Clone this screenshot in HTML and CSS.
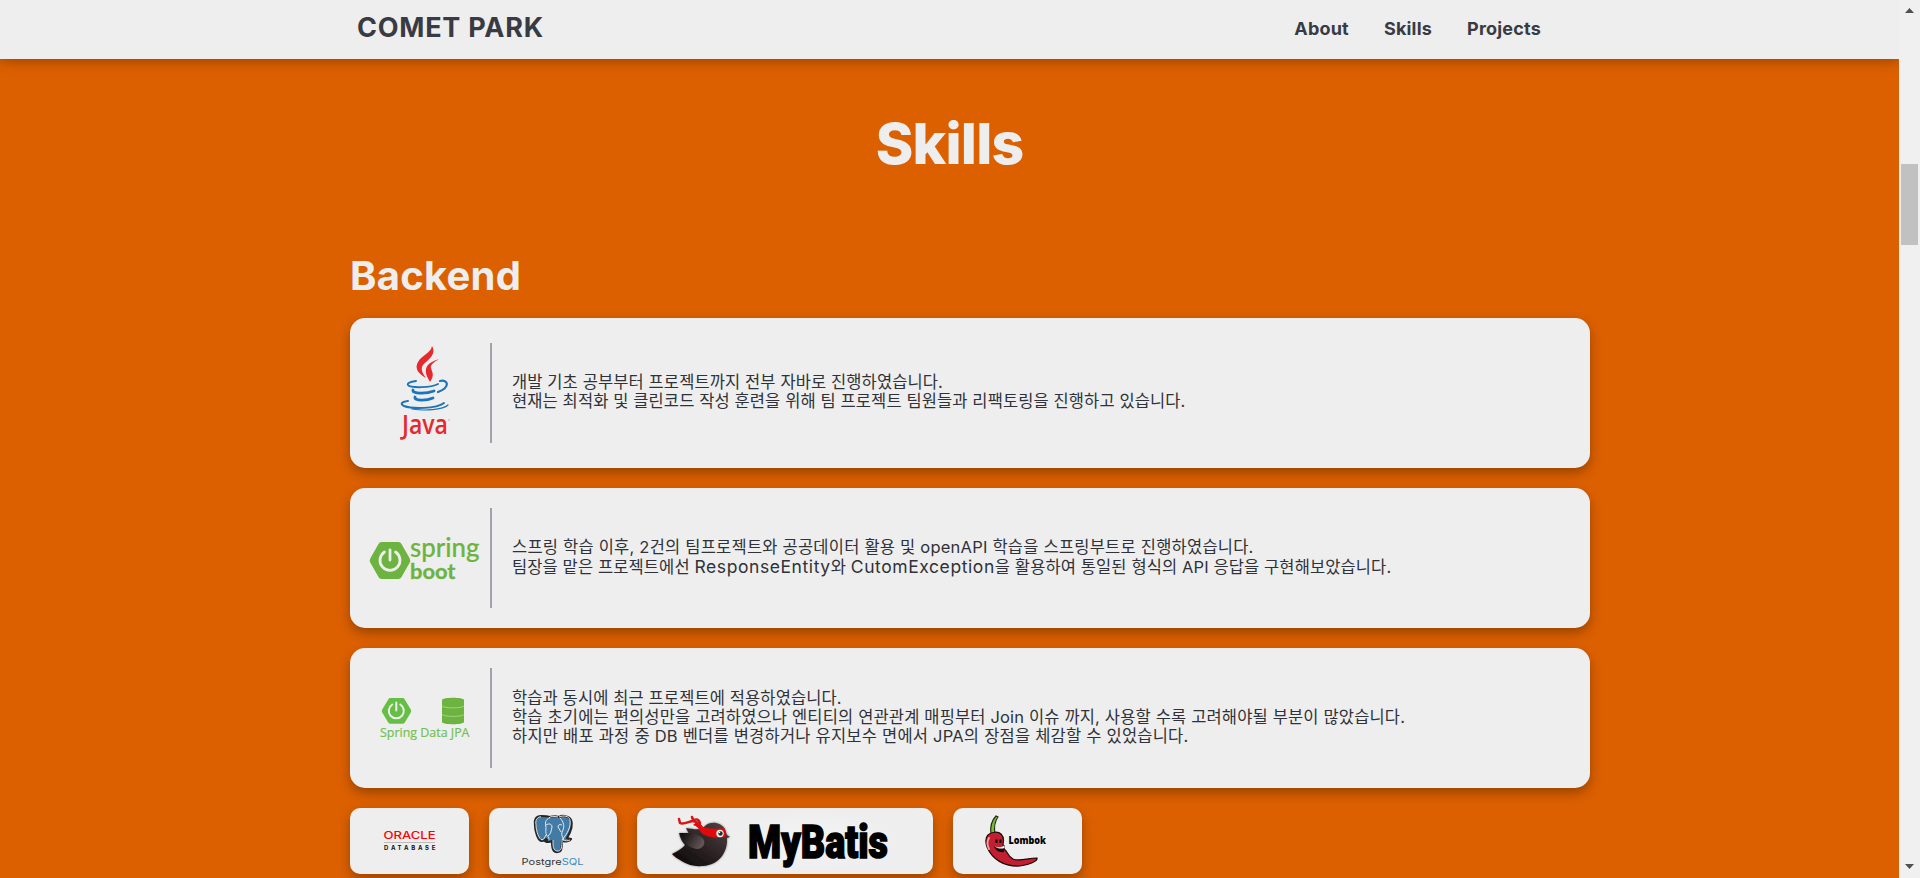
FILE: index.html
```html
<!DOCTYPE html>
<html lang="ko">
<head>
<meta charset="utf-8">
<title>COMET PARK</title>
<link rel="stylesheet" href="styles.css">
</head>
<body>
<div class="page">
  <div class="view">
    <header class="header">
      <div class="brand">COMET PARK</div>
      <nav class="nav"><span>About</span><span>Skills</span><span>Projects</span></nav>
    </header>
    <main class="main">
      <h1 class="title">Skills</h1>
      <section class="section">
        <h2 class="subtitle">Backend</h2>
        <article class="card card-tall">
          <svg class="logo" viewBox="370 343 110 100">
            <g fill="#e52a2e">
              <path d="M432 346c5 8-4 14-9 19-3 4 0 9 3 13-7-4-12-9-8-16 4-7 13-9 14-16z"/>
              <path d="M439 359c-5 3-9 6-8 9 1 4 4 7-1 14-2-4-5-8-4-13 1-6 8-8 13-10z"/>
            </g>
            <g fill="none" stroke="#1b75bb" stroke-linecap="round">
              <path d="M416 381c-6 1-9 2-8 4 2 3 23 3 30-1" stroke-width="2"/>
              <path d="M440 381c8-2 11 6-2 11" stroke-width="2.2"/>
              <path d="M413 390c-1 4 13 4 21 1M415 397c-1 4 11 4 18 1" stroke-width="2.8"/>
              <path d="M408 401c-7 1-8 3-4 5 8 3 32 3 40-3" stroke-width="2"/>
              <path d="M412 409c12 2 31 1 36-4" stroke-width="1.2"/>
            </g>
            <text x="402" y="434" class="java" textLength="46" lengthAdjust="spacingAndGlyphs">Java</text>
            <circle cx="449" cy="420" r=".5" fill="#e52a2e"/>
          </svg>
          <div class="desc">
            <p class="s1">개발 기초 공부부터 프로젝트까지 전부 자바로 진행하였습니다.</p>
            <p class="s1">현재는 최적화 및 클린코드 작성 훈련을 위해 팀 프로젝트 팀원들과 리팩토링을 진행하고 있습니다.</p>
          </div>
        </article>
        <article class="card">
          <svg class="logo" viewBox="370 508 110 100">
            <path d="M381.500 542h17q2 0 3 2l8 14q1.500 2.500 0 5l-8 14q-1 2-3 2h-17q-2 0-3-2l-8-14q-1.500-2.500 0-5l8-14q1-2 3-2z" fill="#6db33f"/>
            <path d="M384.500 552a10 10 0 1 0 11 0M390 550v10" fill="none" stroke="#eee" stroke-width="2.800" stroke-linecap="round"/>
            <text x="410" y="556.500" class="spring" textLength="69.500" lengthAdjust="spacingAndGlyphs">spring</text>
            <text x="410" y="578.500" class="boot" textLength="45.500" lengthAdjust="spacingAndGlyphs">boot</text>
          </svg>
          <div class="desc">
            <p class="s2">스프링 학습 이후, 2건의 팀프로젝트와 공공데이터 활용 및 openAPI 학습을 스프링부트로 진행하였습니다.</p>
            <p class="s1">팀장을 맡은 프로젝트에선 <span class="latin">ResponseEntity</span>와 <span class="latin">CutomException</span>을 활용하여 통일된 형식의 API 응답을 구현해보았습니다.</p>
          </div>
        </article>
        <article class="card">
          <svg class="logo" viewBox="370 668 110 100">
            <path d="M390.500 698h12q1.500 0 2.300 1.400l6 10q.9 1.500 0 3l-6 10q-.8 1.400-2.300 1.400h-12q-1.500 0-2.300-1.400l-6-10q-.9-1.500 0-3l6-10q.8-1.400 2.300-1.400z" fill="#66bf45"/>
            <path d="M392.300 704.500a7.500 7.500 0 1 0 8 0M396.300 702.500v8" fill="none" stroke="#eee" stroke-width="2" stroke-linecap="round"/>
            <path d="M442 700c0-3 22-3 22 0v22c0 3-22 3-22 0z" fill="#6db33f"/>
            <path d="M442 706c2 2.500 20 2.500 22 0M442 714.500c2 2.500 20 2.500 22 0" fill="none" stroke="#a5d08a" stroke-width="1"/>
            <text x="380" y="736.500" class="jpa" textLength="89.500" lengthAdjust="spacingAndGlyphs">Spring Data JPA</text>
          </svg>
          <div class="desc">
            <p class="s1">학습과 동시에 최근 프로젝트에 적용하였습니다.</p>
            <p class="s3">학습 초기에는 편의성만을 고려하였으나 엔티티의 연관관계 매핑부터 Join 이슈 까지, 사용할 수록 고려해야될 부분이 많았습니다.</p>
            <p class="s2">하지만 배포 과정 중 DB 벤더를 변경하거나 유지보수 면에서 JPA의 장점을 체감할 수 있었습니다.</p>
          </div>
        </article>
        <div class="chips">
          <div class="chip">
            <svg width="119" height="66" viewBox="350 808 119 66">
              <text x="383.500" y="838.700" class="oracle" textLength="52" lengthAdjust="spacingAndGlyphs">ORACLE</text>
              <path d="M384 842.500h51" stroke="#bbb"/>
              <text x="384" y="850.200" class="database" textLength="51.500">DATABASE</text>
            </svg>
          </div>
          <div class="chip">
            <svg width="128" height="66" viewBox="489 808 128 66">
              <path d="M541 816c-5 0-7 4-6 9 0 6 3 16 7 16 2 0 3-1 4-2l1 1-2 1c3 2 5 1 7 0 0 4 0 8 2 10 2 2 6 1 7-1 1-3 1-6 1-9 3 1 8 0 9-2l-4-1c3-5 6-13 4-18-2-4-8-5-12-3-3-1-6-1-9 0-3-1-6-1-9-1z" fill="#427ca6" stroke="#262626" stroke-width="2.200" stroke-linejoin="round"/>
              <path d="M541 816.800c-4 0-6 4-5 8 0 6 3 15 6 15 2 0 3-3 4-5M550 817.500c-5 2-5 6-4 10 0 3-1 5 1 8 1 1 2 2 2 4M558 817c-4-1-7-1-9 1M559 817c5-2 10-1 11 3 1 6-2 12-5 16l-3 4M560 818c4 4 5 9 2 14-1 3 1 6 2 8M546 825c3-2 6-1 6 2-1 4-1 7-4 9M562 825c-3-1-4 0-4 2l3 5M553 840c0 5 0 9 2 10 2 2 5 1 6-1 1-3 1-6 1-9M563 840c2 1 5 1 7 0" fill="none" stroke="#f4f4f4" stroke-width=".9"/>
              <text x="521.500" y="864.500" class="pg" textLength="62" lengthAdjust="spacingAndGlyphs">Postgre<tspan fill="#3d8bbd">SQL</tspan></text>
            </svg>
          </div>
          <div class="chip">
            <svg width="296" height="66" viewBox="637 808 296 66">
              <defs>
                <radialGradient id="glow"><stop offset="0" stop-color="#f4f4f4"/><stop offset="1" stop-color="#eee"/></radialGradient>
                <linearGradient id="bird" x1="0" y1="1" x2=".9" y2="0"><stop offset="0" stop-color="#060404"/><stop offset=".5" stop-color="#2b2223"/><stop offset="1" stop-color="#4d4142"/></linearGradient>
                <linearGradient id="wing" x1="0" y1="0" x2="1" y2=".4"><stop offset="0" stop-color="#080606"/><stop offset="1" stop-color="#615253"/></linearGradient>
                <filter id="soft" x="-20%" y="-20%" width="140%" height="140%"><feDropShadow dx="0" dy="0" stdDeviation="1.300" flood-opacity=".45"/></filter>
              </defs>
              <rect x="725" y="811" width="180" height="60" fill="url(#glow)"/>
              <g filter="url(#soft)">
                <path d="M672 854c6-3 11-6 13-9-3-3-5-7-6-12l10 1-3-6c8 1 15 3 19-2 6-6 17-3 20 3l2 6 3 2-3 1c1 14-8 27-24 28-11 1-19-3-23-6-4-2-6-4-8-6z" fill="url(#bird)"/>
                <path d="M680 833c10 0 20 0 24 7 2 7-5 11-11 8-7-2-11-9-13-15z" fill="url(#wing)"/>
              </g>
              <path d="M698 821l5 6c6 2 15 2 21 1q3 5 1 9c-8 2-22 0-25-6-2-4-4-5-7-6z" fill="#df0a0a"/>
              <path d="M702 828c-3-5-6-7-10-7-4 1-9 4-12 2l-1-4M700 823c-1-4-3-4-7-3l-1-3" fill="none" stroke="#d91515" stroke-width="2.500" stroke-linecap="round"/>
              <circle cx="720" cy="833.500" r="3.700" fill="#f5f5f5"/><circle cx="720.500" cy="833.500" r="2.200" fill="#17313a"/><circle cx="719.500" cy="832.500" r=".7" fill="#fff"/>
              <text x="748" y="857.500" class="mybatis" textLength="140" lengthAdjust="spacingAndGlyphs">MyBatis</text>
            </svg>
          </div>
          <div class="chip">
            <svg width="129" height="66" viewBox="953 808 129 66">
              <path d="M991 835c-1-7 0-14 5-19l2 1c-4 5-4 11-3 18z" fill="#7cb83a" stroke="#1b2a10" stroke-width="1.100"/>
              <path d="M988 835c3-3 10-4 13-1s3 6 2 10l1 5c4 2 2 6 9 10 7 3 14-1 24-1 1 3-8 7-17 8-16 1-28-7-33-19-2-6-1-10 1-12z" fill="#c41f30" stroke="#1a0608" stroke-width="1.200"/>
              <path d="M989 838c-2 3-2 7 0 11" stroke="#ee9ba2" stroke-width="2" fill="none" stroke-linecap="round"/>
              <path d="M996.500 839.500v3.500M1000.500 839.500v3.500" stroke="#140406" stroke-width="2"/>
              <path d="M994 846c3 2 8 2 11-1 0 3-1 5-1 7-5 1-9-2-10-6z" fill="#111"/><path d="M994.500 846c3 2 7 1.500 10-.5v2.500c-3 1-7 1-10-2z" fill="#fff"/>
              <text x="1008.500" y="844.200" class="lombok" textLength="37.500" lengthAdjust="spacingAndGlyphs">Lombok</text>
            </svg>
          </div>
        </div>
      </section>
    </main>
  </div>
  <div class="scrollbar">
    <svg width="9" height="5" viewBox="0 0 9 5"><path d="M0 5L4.500 0L9 5z" fill="#505050"/></svg>
    <div class="thumb"></div>
    <svg width="9" height="5" viewBox="0 0 9 5"><path d="M0 0L4.500 5L9 0z" fill="#505050"/></svg>
  </div>
</div>
</body>
</html>
```
FILE: styles.css
```css
* { box-sizing: border-box; margin: 0; padding: 0; }
body { width: 1920px; height: 878px; overflow: hidden; background: #dc6000; font-family: Inter, "Noto Sans CJK KR", sans-serif; color: #383b43; }
.page { display: flex; height: 878px; overflow: hidden; }
.view { width: 1899px; height: 878px; overflow: hidden; background: #dc6000; }
.header { height: 59px; padding: 0 358px 0 357px; display: flex; justify-content: space-between; align-items: center; background: #eee; box-shadow: 0 2px 12px rgba(0,0,0,.3); }
.brand { font-size: 27px; font-weight: 700; line-height: 56px; height: 59px; letter-spacing: .75px; }
.nav { display: flex; gap: 35px; font-size: 18px; font-weight: 700; line-height: 57px; height: 59px; letter-spacing: .2px; }
.title { height: 169px; padding-top: 50px; text-align: center; font-size: 57px; line-height: 70px; font-weight: 800; letter-spacing: -.8px; color: #eee; }
.section { width: 1240px; margin-left: 350px; }
.subtitle { height: 90px; padding-top: 23px; font-size: 40px; line-height: 50px; font-weight: 700; letter-spacing: .25px; color: #eee; }
.card { display: flex; align-items: center; height: 140px; margin-bottom: 20px; padding: 0 20px; border-radius: 15px; background: #eee; box-shadow: 0 5px 12px rgba(0,0,0,.3); }
.card-tall { height: 150px; }
.logo { width: 110px; height: 100px; margin-right: 10px; flex: none; overflow: visible; }
.desc { height: 100px; padding: 0 0 2px 20px; border-left: 2px solid #a0a4aa; display: flex; flex-direction: column; justify-content: center; }
.desc p { height: 19px; line-height: 19px; font-size: 16.5px; white-space: nowrap; color: #2f3238; }
.desc .s1 { letter-spacing: .11px; }
.desc .s2 { letter-spacing: .22px; }
.desc .s3 { letter-spacing: .16px; }
.latin { font-size: 17.5px; letter-spacing: .58px; }
.chips { display: flex; gap: 20px; }
.chip { height: 66px; border-radius: 10px; background: #eee; box-shadow: 0 5px 12px rgba(0,0,0,.3); }
.chip svg { display: block; }
.java { font: 600 27px "Open Sans", sans-serif; fill: #e52a2e; }
.spring { font: 500 27px Lato, sans-serif; fill: #6db33f; stroke: #6db33f; stroke-width: .2; }
.boot { font: 700 20px Lato, sans-serif; fill: #6db33f; stroke: #6db33f; stroke-width: .3; }
.jpa { font: 400 12.5px "Open Sans", sans-serif; fill: #72c251; stroke: #72c251; stroke-width: .2; }
.oracle { font: 500 9.8px Inter, sans-serif; fill: #f00; }
.database { font: 700 6px Inter, sans-serif; fill: #111; }
.pg { font: 400 9px Inter, sans-serif; fill: #333; }
.mybatis { font: 900 47px Roboto, sans-serif; fill: #000; stroke: #000; stroke-width: 1.6; }
.lombok { font: 800 9.8px "Open Sans", sans-serif; fill: #000; }
.scrollbar { width: 21px; height: 878px; padding: 8px 0 9px; background: #f0f0f0; display: flex; flex-direction: column; align-items: center; }
.thumb { width: 17px; height: 81px; margin: 151px 0 auto; background: #c1c1c1; }
```
